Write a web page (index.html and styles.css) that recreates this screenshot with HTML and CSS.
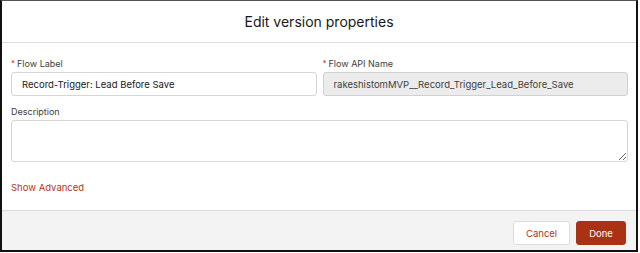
FILE: index.html
```html
<!DOCTYPE html>
<html lang="en">
<head>
  <meta charset="UTF-8">
  <meta name="viewport" content="width=device-width, initial-scale=1.0">
  <title>Edit version properties</title>
  <link rel="stylesheet" href="styles.css">
</head>
<body>
  <div class="frame">
    <!-- Modal header -->
    <div class="modal-header">
      <h2>Edit version properties</h2>
    </div>

    <!-- Modal body -->
    <div class="modal-body">
      <div class="row">
        <div class="field">
          <label for="flowLabel"><abbr class="required">*</abbr>Flow Label</label>
          <input type="text" id="flowLabel" class="text-input" value="Record-Trigger: Lead Before Save">
        </div>
        <div class="field">
          <label for="apiName"><abbr class="required">*</abbr>Flow API Name</label>
          <input type="text" id="apiName" class="text-input readonly" value="rakeshistomMVP__Record_Trigger_Lead_Before_Save" readonly>
        </div>
      </div>

      <div class="field">
        <label for="description">Description</label>
        <textarea id="description" class="text-area"></textarea>
      </div>

      <a href="#" class="advanced-link">Show Advanced</a>
    </div>

    <!-- Modal footer -->
    <div class="modal-footer">
      <button class="btn btn-neutral">Cancel</button>
      <button class="btn btn-brand">Done</button>
    </div>
  </div>
</body>
</html>
```

FILE: styles.css
```css
body {
  margin: 0;
  font-family: Inter, "Liberation Sans", Arial, sans-serif;
  background-color: #fff;
  color: #181818;
}
.frame {
  width: 638px;
  height: 252px;
  box-sizing: border-box;
  border-top: 1px solid #555;
  border-left: 2px solid #111;
  border-right: 2px solid #111;
  border-bottom: 2px solid #111;
  display: flex;
  flex-direction: column;
  background: #fff;
}
.modal-header {
  height: 41px;
  border-bottom: 1px solid #dcdcdc;
  display: flex;
  align-items: center;
  justify-content: center;
}
.modal-header h2 {
  margin: 0;
  font-size: 14px;
  font-weight: normal;
  color: #181818;
}
.modal-body {
  flex: 1;
  padding: 14px 8px 0 9px;
}
.row {
  display: grid;
  grid-template-columns: 1fr 1fr;
  gap: 6px;
}
.field {
  display: flex;
  flex-direction: column;
  margin-bottom: 9px;
}
.field label {
  font-size: 9px;
  line-height: 13px;
  color: #3e3e3c;
  margin-bottom: 2px;
}
.required {
  color: #c23934;
  text-decoration: none;
  font-size: 8px;
  margin-right: 2px;
  vertical-align: 1px;
}
.text-input {
  height: 24px;
  box-sizing: border-box;
  border: 1px solid #d6d6d6;
  border-radius: 3px;
  padding: 0 10px;
  font-family: inherit;
  font-size: 9.5px;
  color: #181818;
  background: #fff;
  outline: none;
}
.text-input.readonly {
  background: #ececec;
  border-color: #d0d0d0;
  color: #3e3e3c;
}
.text-area {
  height: 42px;
  box-sizing: border-box;
  border: 1px solid #d6d6d6;
  border-radius: 3px;
  resize: vertical;
  font-family: inherit;
  outline: none;
}
.advanced-link {
  display: block;
  margin-top: 19px;
  font-size: 9.5px;
  line-height: 14px;
  color: #b0361c;
  text-decoration: none;
}
.modal-footer {
  height: 40px;
  box-sizing: border-box;
  border-top: 1px solid #dcdcdc;
  background: #f3f3f3;
  display: flex;
  justify-content: flex-end;
  align-items: flex-start;
  gap: 6px;
  padding: 10px 10px 0 0;
}
.btn {
  height: 24px;
  box-sizing: border-box;
  border-radius: 3px;
  font-family: inherit;
  font-size: 9.5px;
  padding: 0 12px;
  cursor: pointer;
}
.btn-neutral {
  width: 57px;
  background: #fff;
  border: 1px solid #dcdcdc;
  color: #b0361c;
}
.btn-brand {
  width: 50px;
  background: #aa3214;
  border: 1px solid #aa3214;
  color: #fff;
}
```
